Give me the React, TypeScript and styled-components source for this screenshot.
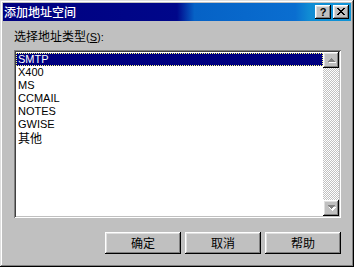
import React from "react";
import styled, { createGlobalStyle } from "styled-components";

const GlobalStyle = createGlobalStyle`
  html, body { margin: 0; padding: 0; background: #c0c0c0; }
  body { font-family: "Liberation Sans", "Noto Sans CJK SC", sans-serif; }
  * { box-sizing: border-box; }
`;

const Window = styled.div`
  width: 354px;
  height: 267px;
  padding: 3px;
  background: #c0c0c0;
  display: flex;
  flex-direction: column;
  box-shadow: inset -1px -1px #000000, inset 1px 1px #dfdfdf,
    inset -2px -2px #808080, inset 2px 2px #ffffff;
`;

const TitleBar = styled.div`
  height: 18px;
  display: flex;
  align-items: center;
  padding: 0 2px 0 1px;
  background: linear-gradient(
    90deg,
    #000080 0%,
    #00078a 50%,
    #0662c6 55%,
    #0a6ed0 84%,
    #108cd4 88%,
    #1094d6 100%
  );
`;

const Title = styled.span`
  color: #ffffff;
  font-family: "Noto Sans CJK SC", sans-serif;
  font-size: 12px;
  line-height: 18px;
  font-weight: 500;
`;

const TitleButtons = styled.div`
  margin-left: auto;
  display: flex;
  gap: 2px;
`;

const raised = `
  background: #c0c0c0;
  box-shadow: inset -1px -1px #000000, inset 1px 1px #ffffff,
    inset -2px -2px #808080, inset 2px 2px #dfdfdf;
`;

const CaptionButton = styled.div`
  width: 16px;
  height: 14px;
  ${raised}
  display: flex;
  align-items: center;
  justify-content: center;
  font-family: "Liberation Sans", sans-serif;
  font-weight: bold;
  font-size: 11px;
  line-height: 14px;
  color: #000;
  padding-bottom: 1px;
`;

const Body = styled.div`
  flex: 1;
  display: flex;
  flex-direction: column;
  padding: 8px 10px 10px 11px;
`;

const Label = styled.div`
  height: 14px;
  font-size: 12px;
  line-height: 14px;
  color: #000;
  font-family: "Noto Sans CJK SC", sans-serif;
`;

const Latin = styled.span`
  font-family: "Liberation Sans", sans-serif;
  font-size: 11px;
`;

const Underline = styled.span`
  text-decoration: underline;
`;

const ListBox = styled.div`
  margin-top: 7px;
  height: 168px;
  padding: 2px;
  background: #ffffff;
  display: flex;
  box-shadow: inset 1px 1px #808080, inset -1px -1px #ffffff,
    inset 2px 2px #404040, inset -2px -2px #c0c0c0;
`;

const Items = styled.div`
  flex: 1;
  padding-top: 1px;
  display: flex;
  flex-direction: column;
`;

const Row = styled.div<{ $selected?: boolean; $cjk?: boolean }>`
  height: 13px;
  line-height: 13px;
  padding-left: 2px;
  font-size: ${(p) => (p.$cjk ? "12px" : "11px")};
  font-family: ${(p) =>
    p.$cjk ? `"Noto Sans CJK SC", sans-serif` : `"Liberation Sans", sans-serif`};
  color: ${(p) => (p.$selected ? "#ffffff" : "#000000")};
  background: ${(p) => (p.$selected ? "#000080" : "transparent")};
  outline: ${(p) => (p.$selected ? "1px dotted #ffff80" : "none")};
  outline-offset: -1px;
  white-space: nowrap;
`;

const Scrollbar = styled.div`
  width: 16px;
  display: flex;
  flex-direction: column;
`;

const ScrollButton = styled.div`
  width: 16px;
  height: 16px;
  ${raised}
  display: flex;
  align-items: center;
  justify-content: center;
`;

const Track = styled.div`
  flex: 1;
  background-image: conic-gradient(
    #ffffff 25%,
    #c0c0c0 0 50%,
    #ffffff 0 75%,
    #c0c0c0 0
  );
  background-size: 2px 2px;
`;

const ButtonRow = styled.div`
  margin-top: 14px;
  display: flex;
  justify-content: flex-end;
  gap: 4px;
`;

const PushButton = styled.div`
  width: 76px;
  height: 22px;
  ${raised}
  display: flex;
  align-items: center;
  justify-content: center;
  font-family: "Noto Sans CJK SC", sans-serif;
  font-size: 12px;
  color: #000;
  padding-bottom: 1px;
`;

const CloseIcon = () => (
  <svg width="8" height="7" viewBox="0 0 8 7" shapeRendering="crispEdges">
    <path
      d="M0 0h2v1H0zM6 0h2v1H6zM1 1h2v1H1zM5 1h2v1H5zM2 2h4v1H2zM3 3h2v1H3zM2 4h4v1H2zM1 5h2v1H1zM5 5h2v1H5zM0 6h2v1H0zM6 6h2v1H6z"
      fill="#000"
    />
  </svg>
);

const Arrow = ({ down }: { down?: boolean }) => (
  <svg width="9" height="6" viewBox="0 0 9 6" shapeRendering="crispEdges">
    {down ? (
      <>
        <path d="M1 1h7v1H1zM2 2h5v1H2zM3 3h3v1H3zM4 4h1v1H4z" fill="#ffffff" transform="translate(1,1)" />
        <path d="M0 0h7v1H0zM1 1h5v1H1zM2 2h3v1H2zM3 3h1v1H3z" fill="#808080" transform="translate(1,0)" />
      </>
    ) : (
      <>
        <path d="M3 0h1v1H3zM2 1h3v1H2zM1 2h5v1H1zM0 3h7v1H0z" fill="#ffffff" transform="translate(2,2)" />
        <path d="M3 0h1v1H3zM2 1h3v1H2zM1 2h5v1H1zM0 3h7v1H0z" fill="#808080" transform="translate(1,1)" />
      </>
    )}
  </svg>
);

const items = ["SMTP", "X400", "MS", "CCMAIL", "NOTES", "GWISE", "其他"];

export default function App() {
  return (
    <>
      <GlobalStyle />
      <Window>
        <TitleBar>
          <Title>添加地址空间</Title>
          <TitleButtons>
            <CaptionButton>?</CaptionButton>
            <CaptionButton>
              <CloseIcon />
            </CaptionButton>
          </TitleButtons>
        </TitleBar>
        <Body>
          <Label>
            选择地址类型
            <Latin>
              (<Underline>S</Underline>):
            </Latin>
          </Label>
          <ListBox>
            <Items>
              {items.map((it, i) => (
                <Row key={it} $selected={i === 0} $cjk={it === "其他"}>
                  {it}
                </Row>
              ))}
            </Items>
            <Scrollbar>
              <ScrollButton>
                <Arrow />
              </ScrollButton>
              <Track />
              <ScrollButton>
                <Arrow down />
              </ScrollButton>
            </Scrollbar>
          </ListBox>
          <ButtonRow>
            <PushButton>确定</PushButton>
            <PushButton>取消</PushButton>
            <PushButton>帮助</PushButton>
          </ButtonRow>
        </Body>
      </Window>
    </>
  );
}
